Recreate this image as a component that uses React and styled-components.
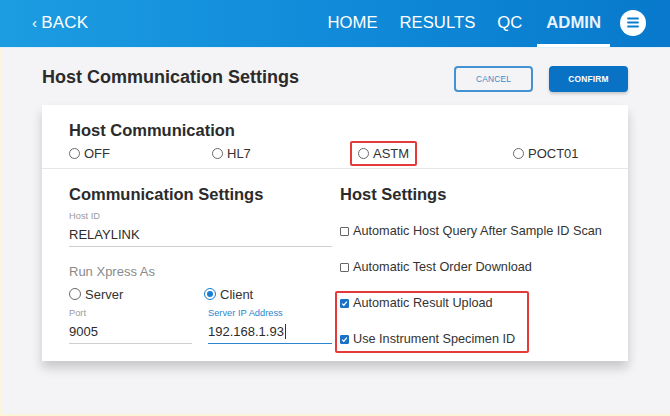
import React from 'react'
import styled, { createGlobalStyle } from 'styled-components'

const GlobalStyle = createGlobalStyle`
  html, body {
    margin: 0;
    padding: 0;
    background: #f4f3f6;
    font-family: "Liberation Sans", Arial, sans-serif;
  }
`;

const Page = styled.div`
  width: 670px;
  height: 416px;
  background: #f4f3f6;
  overflow: hidden;
  box-shadow: inset 1px -2px 0 #fbf4d6;
`;

const Header = styled.header`
  height: 47px;
  display: flex;
  align-items: center;
  background: linear-gradient(90deg, #1c9ce1 0%, #0f89d8 55%, #0879cc 100%);
  color: #fff;
  padding: 0 24px 0 32px;
  border-bottom: 1px solid #e2eef8;
`;

const Back = styled.div`
  font-size: 17px;
  letter-spacing: 0.2px;
  display: flex;
  align-items: center;
  gap: 4px;
  margin-top: -2px;
`;

const Nav = styled.nav`
  margin-left: auto;
  display: flex;
  align-items: stretch;
  height: 47px;
`;

const NavItem = styled.div`
  display: flex;
  align-items: center;
  padding: 0 ${p => (p.active ? '9px' : '11px')};
  margin-left: ${p => p.gap || 0}px;
  font-size: 16.7px;
  font-weight: ${p => (p.active ? 700 : 400)};
  color: ${p => (p.active ? '#e8f3fb' : '#fff')};
  box-shadow: ${p => (p.active ? 'inset 0 -3px 0 #fff' : 'none')};
  padding-bottom: 2px;
`;

const MenuButton = styled.div`
  width: 26px;
  height: 26px;
  border-radius: 50%;
  background: #fff;
  margin-left: 10px;
  align-self: center;
  display: flex;
  align-items: center;
  justify-content: center;
  margin-top: -2px;
`;

const TitleRow = styled.div`
  display: flex;
  align-items: center;
  padding: 18px 42px 0 42px;
  height: 26px;
`;

const Title = styled.h1`
  margin: -3px 0 0 0;
  font-size: 18px;
  font-weight: 700;
  color: #2b2b2b;
`;

const Button = styled.button`
  width: 79px;
  height: 26px;
  border-radius: 4px;
  font-family: inherit;
  font-size: 8.4px;
  letter-spacing: 0.2px;
  margin-left: ${p => p.ml || 0}px;
  border: 2px solid ${p => (p.primary ? '#0a72c4' : '#4392d2')};
  background: ${p => (p.primary ? '#0a72c4' : 'transparent')};
  color: ${p => (p.primary ? '#fff' : '#3f8ac6')};
  font-weight: ${p => (p.primary ? 700 : 400)};
  box-shadow: ${p => (p.primary ? '0 2px 3px rgba(0,0,0,0.18)' : 'none')};
`;

const Buttons = styled.div`
  margin-left: auto;
  display: flex;
`;

const Card = styled.section`
  margin: 13px 42px 0 42px;
  background: #fff;
  box-shadow: 0 7px 10px rgba(0, 0, 0, 0.18);
  height: 256px;
`;

const TopSection = styled.div`
  padding: 16px 0 0 27px;
  height: 47px;
  border-bottom: 1.5px solid #e6e6e6;
`;

const SectionTitle = styled.h2`
  margin: 0;
  font-size: 16.5px;
  font-weight: 700;
  color: #2b2b2b;
`;

const ProtocolRow = styled.div`
  display: grid;
  grid-template-columns: 143px 138px 163px auto;
  align-items: center;
  margin-top: 1px;
`;

const Option = styled.label`
  display: flex;
  align-items: center;
  gap: 4px;
  font-size: ${p => p.size || 13}px;
  color: ${p => p.color || '#333'};
  height: ${p => p.h || 24}px;
  margin-top: ${p => p.mt || 0}px;
  margin-left: ${p => p.ml || 0}px;
`;

const Highlight = styled.div`
  border: 2px solid #e53a3a;
  border-radius: 2px;
  padding: ${p => p.pad || '0 6px'};
  justify-self: start;
  box-sizing: border-box;
`;

const Radio = styled.span`
  width: 9px;
  height: 9px;
  border-radius: 50%;
  border: 1px solid ${p => (p.checked ? '#1a7ed0' : '#6a6a6a')};
  display: inline-flex;
  align-items: center;
  justify-content: center;
  flex-shrink: 0;
  &::after {
    content: '';
    width: 5px;
    height: 5px;
    border-radius: 50%;
    background: ${p => (p.checked ? '#1a7ed0' : 'transparent')};
  }
`;

const BigRadio = styled(Radio)`
  width: 10px;
  height: 10px;
  &::after {
    width: 6px;
    height: 6px;
  }
`;

const Checkbox = styled.span`
  width: 7px;
  height: 7px;
  border: 1px solid ${p => (p.checked ? '#1a72c8' : '#666')};
  border-radius: 1px;
  background: ${p => (p.checked ? '#1a72c8' : '#fff')};
  display: inline-flex;
  align-items: center;
  justify-content: center;
  flex-shrink: 0;
`;

const Columns = styled.div`
  display: grid;
  grid-template-columns: 263px 1fr;
  column-gap: 8px;
  padding: 16px 0 0 27px;
`;

const Column = styled.div`
  display: flex;
  flex-direction: column;
`;

const FieldLabel = styled.div`
  font-size: 9.3px;
  color: ${p => (p.focused ? '#2a86cf' : '#9a9a9a')};
  margin-top: ${p => p.mt || 0}px;
`;

const FieldValue = styled.div`
  font-size: 13px;
  color: #2b2b2b;
  height: 24px;
  display: flex;
  align-items: center;
  border-bottom: ${p => (p.focused ? '1.5px solid #2a86cf' : '1px solid #cfcfcf')};
  margin-top: 1px;
`;

const Caret = styled.span`
  display: inline-block;
  width: 1px;
  height: 15px;
  background: #333;
  margin-left: 1px;
`;

const Muted = styled.div`
  font-size: 13px;
  color: #8a8a8a;
  margin-top: 17px;
`;

const Pair = styled.div`
  display: grid;
  grid-template-columns: ${p => p.cols};
  column-gap: 16px;
`;

const CheckList = styled.div`
  display: flex;
  flex-direction: column;
  margin-top: 9px;
`;

const CheckRow = styled.div`
  height: ${p => p.h || 36}px;
  display: flex;
  align-items: center;
`;

const Ok = () => (
  <svg width="7" height="7" viewBox="0 0 8 8">
    <path d="M1.3 4.2 L3.2 6 L6.7 1.8" fill="none" stroke="#fff" strokeWidth="1.4" />
  </svg>
);

const App = () => (
  <Page>
    <GlobalStyle />
    <Header>
      <Back>
        <span style={{ fontSize: 15 }}>‹</span>
        <span>BACK</span>
      </Back>
      <Nav>
        <NavItem>HOME</NavItem>
        <NavItem>RESULTS</NavItem>
        <NavItem>QC</NavItem>
        <NavItem active gap={4}>ADMIN</NavItem>
        <MenuButton>
          <svg width="12" height="11" viewBox="0 0 12 11">
            <path d="M1 1.5 H11 M1 5.5 H11 M1 9.5 H11" stroke="#0a7fd0" strokeWidth="1.8" strokeLinecap="round" />
          </svg>
        </MenuButton>
      </Nav>
    </Header>

    <TitleRow>
      <Title>Host Communication Settings</Title>
      <Buttons>
        <Button>CANCEL</Button>
        <Button primary ml={16}>CONFIRM</Button>
      </Buttons>
    </TitleRow>

    <Card>
      <TopSection>
        <SectionTitle>Host Communication</SectionTitle>
        <ProtocolRow>
          <Option><Radio />OFF</Option>
          <Option><Radio />HL7</Option>
          <Highlight>
            <Option h={21}><Radio />ASTM</Option>
          </Highlight>
          <Option><Radio />POCT01</Option>
        </ProtocolRow>
      </TopSection>

      <Columns>
        <Column>
          <SectionTitle>Communication Settings</SectionTitle>
          <FieldLabel mt={7}>Host ID</FieldLabel>
          <FieldValue>RELAYLINK</FieldValue>
          <Muted>Run Xpress As</Muted>
          <Pair cols="123px 124px">
            <div>
              <Option mt={3}><BigRadio />Server</Option>
              <FieldLabel mt={2}>Port</FieldLabel>
              <FieldValue>9005</FieldValue>
            </div>
            <div>
              <Option mt={3} ml={-4}><BigRadio checked />Client</Option>
              <FieldLabel mt={2} focused>Server IP Address</FieldLabel>
              <FieldValue focused>192.168.1.93<Caret /></FieldValue>
            </div>
          </Pair>
        </Column>

        <Column>
          <SectionTitle>Host Settings</SectionTitle>
          <CheckList>
            <CheckRow><Option size={12.7}><Checkbox />Automatic Host Query After Sample ID Scan</Option></CheckRow>
            <CheckRow><Option size={12.7}><Checkbox />Automatic Test Order Download</Option></CheckRow>
            <Highlight pad="2px 0 4px 3px" style={{ width: 194, marginLeft: -5, marginTop: 6 }}>
              <CheckRow h={16}><Option size={12.7}><Checkbox checked><Ok /></Checkbox>Automatic Result Upload</Option></CheckRow>
              <CheckRow h={16} style={{ marginTop: 20 }}><Option size={12.7}><Checkbox checked><Ok /></Checkbox>Use Instrument Specimen ID</Option></CheckRow>
            </Highlight>
          </CheckList>
        </Column>
      </Columns>
    </Card>
  </Page>
)

export default App
